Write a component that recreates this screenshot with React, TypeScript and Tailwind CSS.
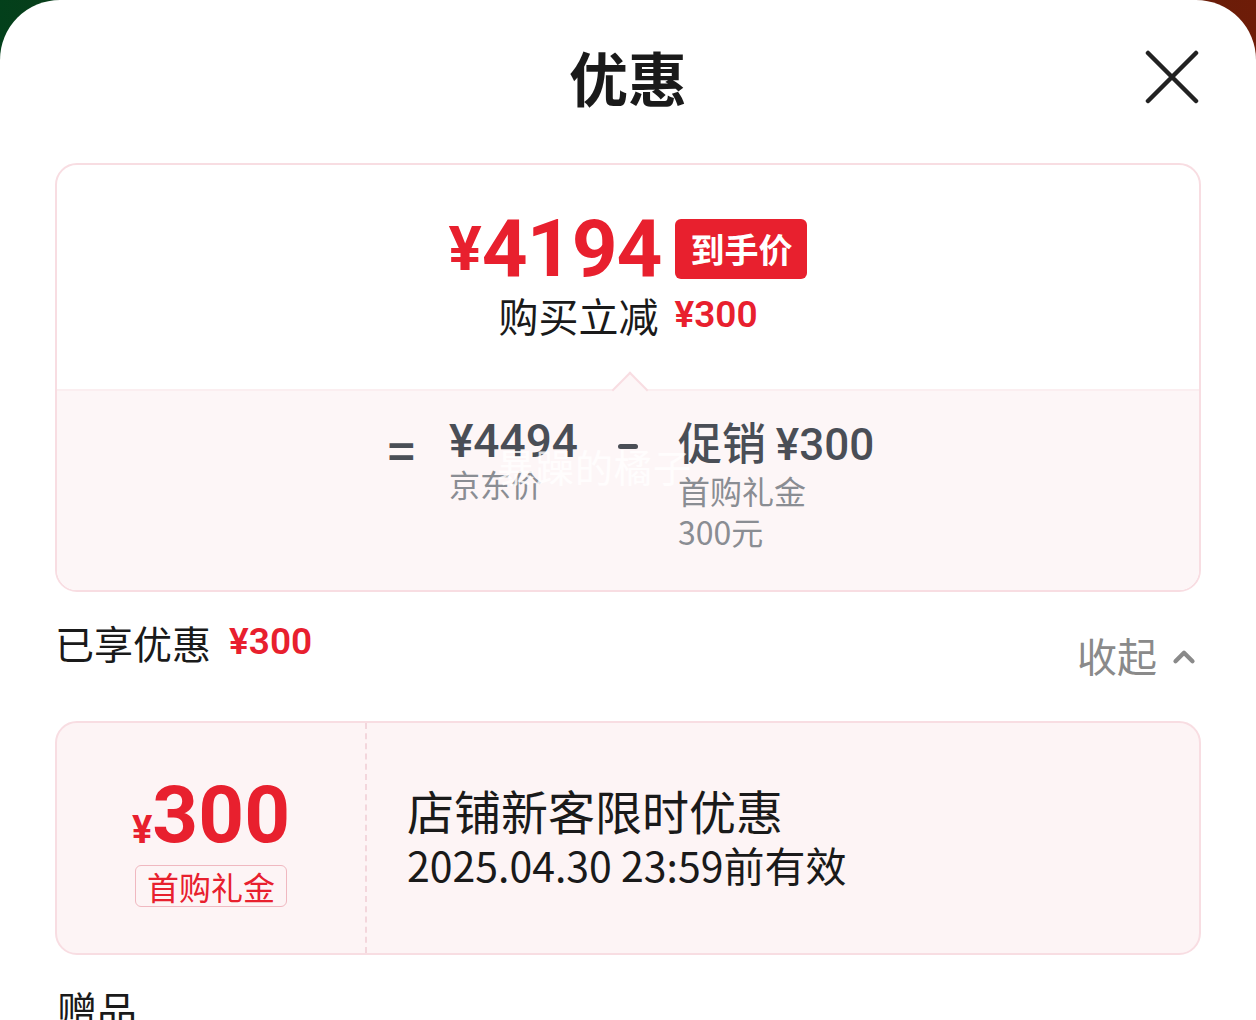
import { ChevronUp } from 'lucide-react';

const red = 'text-[#e8202e]';

function CloseIcon() {
  return (
    <svg width="54" height="54" viewBox="0 0 54 54" fill="none">
      <path d="M3 3L51 51M51 3L3 51" stroke="#222" strokeWidth="4.5" strokeLinecap="round" />
    </svg>
  );
}

function PriceCard() {
  return (
    <div className="mx-[55px] mt-[9px] overflow-hidden rounded-[22px] border-2 border-[#f8dde2]">
      <div className="flex h-[224px] flex-col items-center pt-[44px]">
        <div className="flex items-center">
          <span className={`font-['Roboto',sans-serif] text-[62px] font-bold leading-none ${red}`}>¥</span>
          <span className={`font-['Roboto',sans-serif] text-[80px] font-bold leading-none tracking-[-1px] ${red}`}>4194</span>
          <span className="ml-[14px] rounded-[6px] bg-[#e8202e] px-[15px] py-[6px] font-['Noto_Sans_CJK_SC',sans-serif] text-[34px] font-bold leading-[48px] text-white">
            到手价
          </span>
        </div>
        <div className="-mt-[2px] flex items-center font-['Noto_Sans_CJK_SC',sans-serif]">
          <span className="text-[40px] leading-[56px] text-[#1a1a1a]">购买立减</span>
          <span className={`ml-[16px] font-['Roboto',sans-serif] text-[37px] font-semibold ${red}`}>¥300</span>
        </div>
      </div>
      <div className="relative h-[201px] border-t-2 border-[#fbeef0] bg-[#fdf6f7]">
        <div className="absolute left-[560px] top-[-14px] h-[26px] w-[26px] rotate-45 border-l-2 border-t-2 border-[#f8dde2] bg-[#fdf6f7]" />
        <div className="flex justify-center pl-[6px] pt-[22px] font-['Noto_Sans_CJK_SC',sans-serif]">
          <span className="mr-[34px] mt-[8px] text-[46px] font-bold leading-[56px] text-[#4a4e56]">=</span>
          <div className="flex flex-col">
            <span className="font-['Roboto',sans-serif] text-[46px] font-medium leading-[56px] text-[#4a4e56]">¥4494</span>
            <span className="-mt-[2px] text-[31px] leading-[34px] text-[#8a8d93]">京东价</span>
          </div>
          <div className="mx-[40px] mt-[31px] h-[5px] w-[20px] rounded-full bg-[#4a4e56]" />
          <div className="flex flex-col">
            <span className="text-[44px] font-medium leading-[56px] text-[#4a4e56]">
              促销 <span className="font-['Roboto',sans-serif]">¥300</span>
            </span>
            <span className="-mt-[4px] text-[32px] leading-[42px] text-[#8a8d93]">首购礼金</span>
            <span className="text-[32px] leading-[40px] text-[#8a8d93]">300元</span>
          </div>
        </div>
        <div className="absolute left-[440px] top-[46px] font-['Noto_Sans_CJK_SC',sans-serif] text-[38px] tracking-[1px] text-white/80">
          暴躁的橘子
        </div>
      </div>
    </div>
  );
}

function CouponCard() {
  return (
    <div className="mx-[55px] mt-[40px] flex h-[234px] rounded-[22px] border-2 border-[#f8dde2] bg-[#fdf4f5] font-['Noto_Sans_CJK_SC',sans-serif]">
      <div className="flex w-[310px] flex-col items-center justify-center border-r-2 border-dashed border-[#f3d6dc] pt-[6px]">
        <div className={`flex items-end font-['Roboto',sans-serif] font-bold leading-none ${red}`}>
          <span className="mb-[6px] text-[38px]">¥</span>
          <span className="text-[80px]">300</span>
        </div>
        <span className={`mt-[10px] rounded-[6px] border border-[#f0b8c0] px-[11px] text-[32px] leading-[40px] ${red}`}>
          首购礼金
        </span>
      </div>
      <div className="flex flex-col justify-center pl-[40px] pb-[6px] text-[#1a1a1a]">
        <span className="text-[47px] leading-[58px]">店铺新客限时优惠</span>
        <span className="text-[41px] leading-[50px]">2025.04.30 23:59前有效</span>
      </div>
    </div>
  );
}

export default function App() {
  return (
    <div className="h-[1020px] w-[1256px] overflow-hidden bg-[linear-gradient(90deg,#03401b,#3a2a10,#6e1c08)]">
      <div className="h-full rounded-t-[60px] bg-white">
        <div className="relative flex h-[154px] items-center justify-center">
          <h1 className="font-['Noto_Sans_CJK_SC',sans-serif] text-[59px] font-bold text-[#1a1a1a]">优惠</h1>
          <div className="absolute right-[57px] top-[50px]">
            <CloseIcon />
          </div>
        </div>
        <PriceCard />
        <div className="mx-[55px] mt-[22px] flex items-start justify-between font-['Noto_Sans_CJK_SC',sans-serif]">
          <div className="flex items-center">
            <span className="text-[39px] leading-[52px] text-[#1a1a1a]">已享优惠</span>
            <span className={`ml-[18px] font-['Roboto',sans-serif] text-[37px] font-semibold ${red}`}>¥300</span>
          </div>
          <div className="mt-[15px] flex items-center text-[#8a8a8a]">
            <span className="text-[40px] leading-[52px]">收起</span>
            <ChevronUp className="ml-[10px] mt-[4px]" size={34} strokeWidth={3} />
          </div>
        </div>
        <CouponCard />
        <div className="ml-[57px] mt-[28px] font-['Noto_Sans_CJK_SC',sans-serif] text-[40px] leading-[52px] text-[#1a1a1a]">
          赠品
        </div>
      </div>
    </div>
  );
}
